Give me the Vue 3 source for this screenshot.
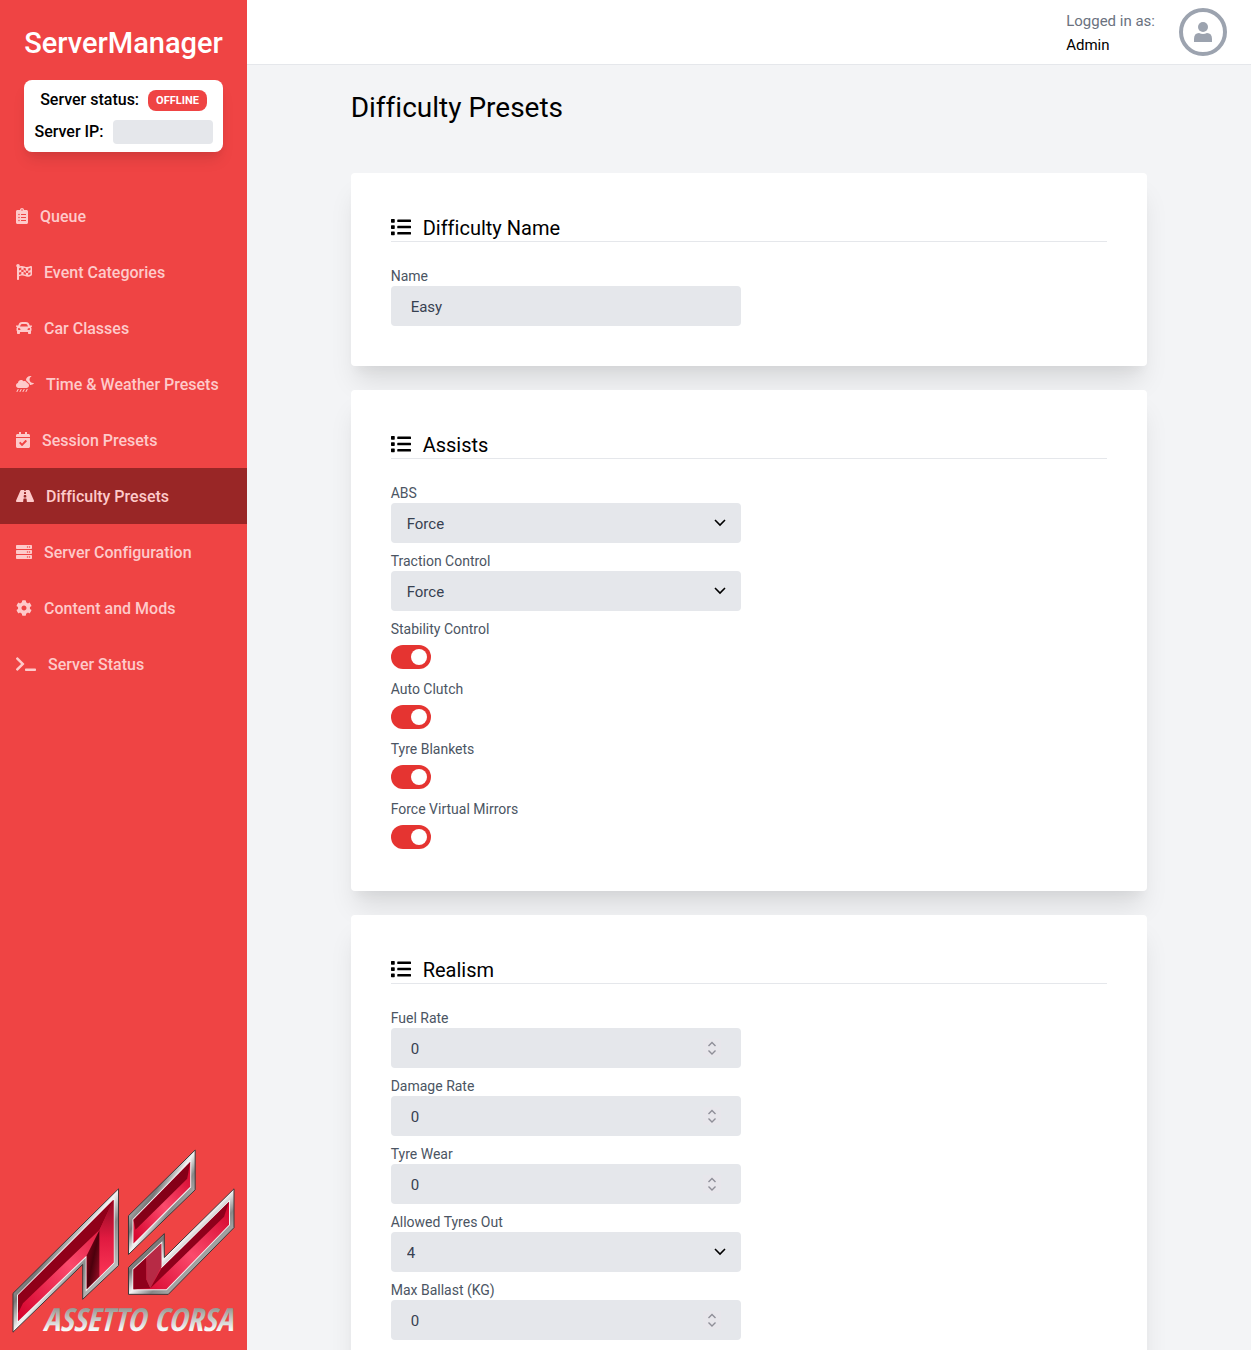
<script setup>
import { ref } from 'vue'

const drops = [364.5, 268.5, 172.5, 76.5]
  .map((x) => `M${x} 418.1c-7.6-4.3-17.4-1.8-21.8 6l-36.6 64c-4.4 7.7-1.7 17.4 6 21.8 2.5 1.4 5.2 2.1 7.9 2.1 5.5 0 10.9-2.9 13.9-8.1l36.6-64c4.3-7.7 1.7-17.4-6-21.8z`)
  .join('')

const rack = [0, 160, 320]
  .map((y) => `M480 ${y + 160}H32c-17.7 0-32-14.3-32-32V${y + 64}c0-17.7 14.3-32 32-32h448c17.7 0 32 14.3 32 32v64c0 17.7-14.3 32-32 32zm-48-88c-13.3 0-24 10.7-24 24s10.7 24 24 24 24-10.7 24-24-10.7-24-24-24zm-64 0c-13.3 0-24 10.7-24 24s10.7 24 24 24 24-10.7 24-24-10.7-24-24-24z`)
  .join('')

const menu = [
  { label: 'Queue', width: 12, path: 'M336 64h-80c0-35.3-28.7-64-64-64s-64 28.7-64 64H48C21.5 64 0 85.5 0 112v352c0 26.5 21.5 48 48 48h288c26.5 0 48-21.5 48-48V112c0-26.5-21.5-48-48-48zM96 424c-13.3 0-24-10.7-24-24s10.7-24 24-24 24 10.7 24 24-10.7 24-24 24zm0-96c-13.3 0-24-10.7-24-24s10.7-24 24-24 24 10.7 24 24-10.7 24-24 24zm0-96c-13.3 0-24-10.7-24-24s10.7-24 24-24 24 10.7 24 24-10.7 24-24 24zm96-192c13.3 0 24 10.7 24 24s-10.7 24-24 24-24-10.7-24-24 10.7-24 24-24zm128 368c0 4.4-3.6 8-8 8H168c-4.4 0-8-3.6-8-8v-16c0-4.4 3.6-8 8-8h144c4.4 0 8 3.6 8 8v16zm0-96c0 4.4-3.6 8-8 8H168c-4.4 0-8-3.6-8-8v-16c0-4.4 3.6-8 8-8h144c4.4 0 8 3.6 8 8v16zm0-96c0 4.4-3.6 8-8 8H168c-4.4 0-8-3.6-8-8v-16c0-4.4 3.6-8 8-8h144c4.4 0 8 3.6 8 8v16z' },
  { label: 'Event Categories', width: 16, path: 'M243.2 189.9V258c26.1 5.9 49.3 15.6 73.6 22.3v-68.2c-26-5.8-49.4-15.5-73.6-22.2zm223.3-123c-34.3 15.9-76.5 31.9-117 31.9C296 98.8 251.7 64 184.3 64c-25 0-47.3 4.4-68 12 2.8-7.3 4.1-15.2 3.6-23.6C118.1 24 94.8 1.2 66.3 0 34.3-1.3 8 24.3 8 56c0 19 9.5 35.8 24 45.9V488c0 13.3 10.7 24 24 24h16c13.3 0 24-10.7 24-24v-94.4c28.3-12.1 63.6-22.1 114.4-22.1 53.6 0 97.8 34.8 165.2 34.8 48.2 0 86.7-16.3 122.5-40.9 8.7-6 13.8-15.8 13.8-26.4V95.9c.1-23.3-24.2-38.8-45.4-29zM169.6 325.5c-25.8 2.7-50 8.2-73.6 16.6v-70.5c26.2-9.3 47.5-15 73.6-17.4v71.3zM464 191c-23.6 9.8-46.3 19.5-73.6 23.9V286c24.8-3.4 51.4-11.8 73.6-26v70.5c-25.1 16.1-48.5 24.7-73.6 27.1V286c-27 3.7-47.9 1.5-73.6-5.6v67.4c-23.9-7.4-47.3-16.7-73.6-21.3V258c-19.7-4.4-40.8-6.8-73.6-3.8v-70c-22.4 3.1-44.6 10.2-73.6 20.9v-70.5c33.2-12.2 50.1-19.8 73.6-22v71.6c27-3.7 48.4-1.3 73.6 5.7v-67.4c23.7 7.4 47.2 16.7 73.6 21.3v68.4c23.7 5.3 47.6 6.9 73.6 2.7V143c27-4.8 52.3-13.6 73.6-22.5z' },
  { label: 'Car Classes', width: 16, path: 'M499.99 176h-59.87l-16.64-41.6C406.38 91.63 365.57 64 319.5 64h-127c-46.06 0-86.88 27.63-103.99 70.4L71.87 176H12.01C4.2 176-1.53 183.34.37 190.91l6 24C7.7 220.25 12.5 224 18.01 224h20.07C24.65 235.73 16 252.78 16 272v48c0 16.12 6.16 30.67 16 41.93V416c0 17.67 14.33 32 32 32h32c17.67 0 32-14.33 32-32v-32h256v32c0 17.67 14.33 32 32 32h32c17.67 0 32-14.33 32-32v-54.07c9.84-11.25 16-25.8 16-41.93v-48c0-19.22-8.65-36.27-22.07-48H494c5.51 0 10.31-3.75 11.64-9.09l6-24c1.89-7.57-3.84-14.91-11.65-14.91zm-352.06-17.83c7.29-18.22 24.94-30.17 44.57-30.17h127c19.63 0 37.28 11.95 44.57 30.17L384 208H128l19.93-49.83zM96 319.8c-19.2 0-32-12.76-32-31.9S76.8 256 96 256s48 28.71 48 47.85-28.8 15.95-48 15.95zm320 0c-19.2 0-48 3.19-48-15.95S396.8 256 416 256s32 12.76 32 31.9-12.8 31.9-32 31.9z' },
  { label: 'Time & Weather Presets', width: 18, path: 'M350.5 225.5c-6.9-37.2-39.3-65.5-78.5-65.5-12.3 0-23.9 3-34.3 8-17.4-24.1-45.6-40-77.7-40-53 0-96 43-96 96 0 .5.2 1.1.2 1.6C27.6 233 0 265.2 0 304c0 44.2 35.8 80 80 80h256c44.2 0 80-35.8 80-80 0-39.2-28.2-71.7-65.5-78.5zm217.4-1.7c-70.4 13.3-135-40.3-135-110.8 0-40.6 21.9-78 57.5-98.1 5.5-3.1 4.1-11.4-2.1-12.5C479.6.8 470.7 0 461.8 0c-77.9 0-141.1 61.2-144.4 137.9 26.7 11.9 48.2 33.8 58.9 61.7 37.1 14.3 64 47.4 70.2 86.8 5.1.5 10 1.5 15.2 1.5 44.7 0 85.6-20.2 112.6-53.3 4.2-4.8-.2-12-6.4-10.8z' + drops },
  { label: 'Session Presets', width: 14, path: 'M436 160H12c-6.6 0-12-5.4-12-12v-36c0-26.5 21.5-48 48-48h48V12c0-6.6 5.4-12 12-12h40c6.6 0 12 5.4 12 12v52h128V12c0-6.6 5.4-12 12-12h40c6.6 0 12 5.4 12 12v52h48c26.5 0 48 21.5 48 48v36c0 6.6-5.4 12-12 12zM12 192h424c6.6 0 12 5.4 12 12v260c0 26.5-21.5 48-48 48H48c-26.5 0-48-21.5-48-48V204c0-6.6 5.4-12 12-12zm333.3 95.9l-28.2-28.4c-4.7-4.7-12.3-4.7-17-.1L194.1 364.7l-46-46.4c-4.7-4.7-12.3-4.7-17-.1l-28.4 28.2c-4.7 4.7-4.7 12.3-.1 17l82.6 83.3c4.7 4.7 12.3 4.7 17 .1l143-141.8c4.7-4.7 4.7-12.3.1-17.1z' },
  { label: 'Difficulty Presets', width: 18, active: true, path: 'M573.19 402.67l-139.79-320C428.43 71.29 417.6 64 405.68 64h-97.59l2.45 23.16c.5 4.72-3.21 8.84-7.96 8.84h-29.16c-4.75 0-8.46-4.12-7.96-8.84L267.91 64h-97.59c-11.93 0-22.76 7.29-27.73 18.67L2.8 402.67C-6.45 423.86 8.31 448 30.54 448h196.84l10.31-97.68c.86-8.14 7.72-14.32 15.91-14.32h68.8c8.19 0 15.05 6.18 15.91 14.32L348.62 448h196.84c22.23 0 36.99-24.14 27.73-45.33zM260.4 135.16a8 8 0 0 1 7.96-7.16h39.29c4.09 0 7.53 3.09 7.96 7.16l4.6 43.58c.75 7.09-4.81 13.26-11.93 13.26h-40.54c-7.13 0-12.68-6.17-11.93-13.26l4.59-43.58zM315.64 304h-55.29c-9.5 0-16.91-8.23-15.91-17.68l5.07-48c.86-8.14 7.72-14.32 15.91-14.32h45.15c8.19 0 15.05 6.18 15.91 14.32l5.07 48c1 9.45-6.41 17.68-15.91 17.68z' },
  { label: 'Server Configuration', width: 16, path: rack },
  { label: 'Content and Mods', width: 16, path: 'M487.4 315.7l-42.6-24.6c4.3-23.2 4.3-47 0-70.2l42.6-24.6c4.9-2.8 7.1-8.6 5.5-14-11.1-35.6-30-67.8-54.7-94.6-3.8-4.1-10-5.1-14.8-2.3L380.8 110c-17.9-15.4-38.5-27.3-60.8-35.1V25.8c0-5.6-3.9-10.5-9.4-11.7-36.7-8.2-74.3-7.8-109.2 0-5.5 1.2-9.4 6.1-9.4 11.7V75c-22.2 7.9-42.8 19.8-60.8 35.1L88.7 85.5c-4.9-2.8-11-1.9-14.8 2.3-24.7 26.7-43.6 58.9-54.7 94.6-1.7 5.4.6 11.2 5.5 14L67.3 221c-4.3 23.2-4.3 47 0 70.2l-42.6 24.6c-4.9 2.8-7.1 8.6-5.5 14 11.1 35.6 30 67.8 54.7 94.6 3.8 4.1 10 5.1 14.8 2.3l42.6-24.6c17.9 15.4 38.5 27.3 60.8 35.1v49.2c0 5.6 3.9 10.5 9.4 11.7 36.7 8.2 74.3 7.8 109.2 0 5.5-1.2 9.4-6.1 9.4-11.7v-49.2c22.2-7.9 42.8-19.8 60.8-35.1l42.6 24.6c4.9 2.8 11 1.9 14.8-2.3 24.7-26.7 43.6-58.9 54.7-94.6 1.5-5.5-.7-11.3-5.6-14.1zM256 336c-44.1 0-80-35.9-80-80s35.9-80 80-80 80 35.9 80 80-35.9 80-80 80z' },
  { label: 'Server Status', width: 20, path: 'M258 273L63.6 467.3c-9.4 9.4-24.6 9.4-33.9 0L7 444.6c-9.4-9.4-9.4-24.5 0-33.9L161 256 7 101.3c-9.3-9.4-9.3-24.5 0-33.9l22.7-22.7c9.4-9.4 24.6-9.4 33.9 0L258 239c9.4 9.4 9.4 24.6 0 34zM640 456v-32c0-13.3-10.7-24-24-24H312c-13.3 0-24 10.7-24 24v32c0 13.3 10.7 24 24 24h304c13.3 0 24-10.7 24-24z' },
]

const listIcon = 'M80 368H16a16 16 0 0 0-16 16v64a16 16 0 0 0 16 16h64a16 16 0 0 0 16-16v-64a16 16 0 0 0-16-16zm0-320H16A16 16 0 0 0 0 64v64a16 16 0 0 0 16 16h64a16 16 0 0 0 16-16V64a16 16 0 0 0-16-16zm0 160H16a16 16 0 0 0-16 16v64a16 16 0 0 0 16 16h64a16 16 0 0 0 16-16v-64a16 16 0 0 0-16-16zm416 176H176a16 16 0 0 0-16 16v32a16 16 0 0 0 16 16h320a16 16 0 0 0 16-16v-32a16 16 0 0 0-16-16zm0-320H176a16 16 0 0 0-16 16v32a16 16 0 0 0 16 16h320a16 16 0 0 0 16-16V80a16 16 0 0 0-16-16zm0 160H176a16 16 0 0 0-16 16v32a16 16 0 0 0 16 16h320a16 16 0 0 0 16-16v-32a16 16 0 0 0-16-16z'

const assistLevels = ['Denied', 'Factory', 'Force']
const cards = ref([
  { title: 'Difficulty Name', fields: [{ id: 'name', label: 'Name', type: 'text', value: 'Easy' }] },
  {
    title: 'Assists',
    fields: [
      { id: 'abs', label: 'ABS', type: 'select', value: 'Force', options: assistLevels },
      { id: 'traction', label: 'Traction Control', type: 'select', value: 'Force', options: assistLevels },
      { id: 'stability', label: 'Stability Control', type: 'toggle', value: true },
      { id: 'clutch', label: 'Auto Clutch', type: 'toggle', value: true },
      { id: 'blankets', label: 'Tyre Blankets', type: 'toggle', value: true },
      { id: 'mirrors', label: 'Force Virtual Mirrors', type: 'toggle', value: true },
    ],
  },
  {
    title: 'Realism',
    fields: [
      { id: 'fuel', label: 'Fuel Rate', type: 'number', value: 0 },
      { id: 'damage', label: 'Damage Rate', type: 'number', value: 0 },
      { id: 'wear', label: 'Tyre Wear', type: 'number', value: 0 },
      { id: 'tyres-out', label: 'Allowed Tyres Out', type: 'select', value: '4', options: ['0', '1', '2', '3', '4'] },
      { id: 'ballast', label: 'Max Ballast (KG)', type: 'number', value: 0 },
    ],
  },
])
</script>

<template>
  <div class="app">
    <aside class="sidebar">
      <div class="brand">ServerManager</div>
      <div class="status">
        <div class="status-row">Server status: <span class="badge">OFFLINE</span></div>
        <div class="status-row">Server IP: <span class="address"></span></div>
      </div>
      <nav class="menu">
        <a v-for="item in menu" :key="item.label" href="#" :class="{ active: item.active }">
          <svg :width="item.width" height="16" :viewBox="`0 0 ${item.width * 32} 512`" aria-hidden="true">
            <path :d="item.path" />
          </svg>
          <span class="caption">{{ item.label }}</span>
        </a>
      </nav>
      <svg class="logo" viewBox="0 0 224 188" role="img" aria-label="Assetto Corsa">
        <defs>
          <linearGradient id="chrome" x1="0" y1="0" x2="1" y2="1">
            <stop offset="0" stop-color="#555" />
            <stop offset=".2" stop-color="#ddd" />
            <stop offset=".4" stop-color="#777" />
            <stop offset=".5" stop-color="#f4f4f4" />
            <stop offset=".6" stop-color="#888" />
            <stop offset=".8" stop-color="#ccc" />
            <stop offset="1" stop-color="#666" />
          </linearGradient>
          <linearGradient id="bar" x1="0" y1="1" x2="1" y2="0">
            <stop offset="0" stop-color="#d4002a" />
            <stop offset=".5" stop-color="#fb4a6c" />
            <stop offset="1" stop-color="#d00028" />
          </linearGradient>
          <linearGradient id="dark" x1="0" y1="0" x2="1" y2="1">
            <stop offset="0" stop-color="#96001c" />
            <stop offset=".5" stop-color="#4c000c" />
            <stop offset="1" stop-color="#a8102c" />
          </linearGradient>
          <linearGradient id="facet" x1="0" y1="0" x2="0" y2="1">
            <stop offset="0" stop-color="#8f0a22" />
            <stop offset=".5" stop-color="#e01a40" />
            <stop offset="1" stop-color="#fb3556" />
          </linearGradient>
          <linearGradient id="steel" x1="0" y1="0" x2="0" y2="1">
            <stop offset=".2" stop-color="#8d8d88" />
            <stop offset=".8" stop-color="#fff" />
          </linearGradient>
        </defs>
        <g fill="url(#chrome)" stroke="#3c3638" stroke-linejoin="round">
          <path d="M1 145L107 40V117L71 151V116L1 184Z" />
          <path d="M117 67L184 1V41L117 106Z" />
          <path d="M117 119L153 85V109L223 40V79L157 146H117Z" />
        </g>
        <g fill="none" stroke="#f2f2f2" stroke-width="2">
          <path d="M6 147L102 51V114L75 141V107L6 173Z" />
          <path d="M122 71L179 13V38L122 95Z" />
          <path d="M122 121L150 95V120L218 53V76L155 141H122Z" />
        </g>
        <path fill="url(#bar)" d="M6 147L102 51V114L75 141V107L6 173Z" />
        <path fill="#900019" d="M6 147L102 51L88 81L11 155L6 165Z" />
        <path fill="url(#dark)" d="M88 81L75 107V141L88 128Z" />
        <path fill="url(#facet)" d="M102 51V114L88 128V81Z" />
        <path fill="url(#bar)" d="M122 71L179 13V38L122 95Z" />
        <path fill="#850018" d="M122 71L179 13L176 30L124 81Z" />
        <path fill="url(#bar)" d="M122 121L150 95V120L218 53V76L155 141H122Z" />
        <path fill="#8f001b" d="M122 121L135 109V131L139 140L122 141Z" />
        <path fill="#b72a45" d="M135 109L150 95V118L139 140L135 131Z" />
        <path fill="#8f001b" d="M150 120L218 53L213 68L139 140Z" />
        <text x="31" y="183">ASSETTO CORSA</text>
      </svg>
    </aside>

    <div class="page">
      <header class="topbar">
        <div class="user">
          <span class="hint">Logged in as:</span>
          <span>Admin</span>
        </div>
        <button class="avatar" type="button" aria-label="Account">
          <svg width="18" height="20" viewBox="0 0 18 20" aria-hidden="true">
            <circle cx="9" cy="5" r="5" />
            <path d="M0 20V17Q0 11 5 11Q9 13 13 11Q18 11 18 17V20Z" />
          </svg>
        </button>
      </header>
      <main class="content">
        <div class="column">
          <h1>Difficulty Presets</h1>
          <section v-for="card in cards" :key="card.title" class="card">
            <h2>
              <svg width="20" height="20" viewBox="0 0 512 512" aria-hidden="true"><path :d="listIcon" /></svg>
              <span class="caption">{{ card.title }}</span>
            </h2>
            <div class="fields">
              <div v-for="field in card.fields" :key="field.id" class="field">
                <label :for="field.id">{{ field.label }}</label>
                <input v-if="field.type === 'text'" :id="field.id" v-model="field.value" class="box" type="text" />
                <div v-else-if="field.type === 'select'" class="holder">
                  <select :id="field.id" v-model="field.value" class="box">
                    <option v-for="option in field.options" :key="option">{{ option }}</option>
                  </select>
                  <svg class="chevron" width="12" height="8" viewBox="0 0 12 8" aria-hidden="true">
                    <path d="M1 1L6 6L11 1" stroke-width="1.6" />
                  </svg>
                </div>
                <div v-else-if="field.type === 'number'" class="holder">
                  <input :id="field.id" v-model="field.value" class="box" type="number" />
                  <svg class="spinner" width="18" height="18" viewBox="0 0 18 18" aria-hidden="true">
                    <path d="M5.500 7L9 3.500L12.500 7M5.500 11.500L9 15L12.500 11.500" stroke-width="1.4" />
                  </svg>
                </div>
                <input v-else :id="field.id" v-model="field.value" class="toggle" type="checkbox" role="switch" />
              </div>
            </div>
          </section>
        </div>
      </main>
    </div>
  </div>
</template>

<style>
body {
  margin: 0;
}
</style>

<style scoped>
* {
  box-sizing: border-box;
}
.app {
  display: flex;
  height: 100vh;
  overflow: hidden;
  background: #f3f4f6;
  color: #000;
  font: 400 16px/24px Roboto, "Liberation Sans", sans-serif;
  font-variant-ligatures: none;
}
.sidebar {
  display: flex;
  flex-direction: column;
  flex: none;
  width: 247px;
  background: #ef4444;
}
.brand {
  margin-top: 24px;
  color: #fff;
  font-size: 29px;
  font-weight: 500;
  line-height: 38px;
  text-align: center;
}
.status {
  display: flex;
  flex-direction: column;
  gap: 8px;
  margin: 18px 24px 36px;
  padding: 8px;
  border-radius: 8px;
  background: #fff;
  box-shadow: 0 10px 15px -3px rgba(0, 0, 0, 0.1), 0 4px 6px -2px rgba(0, 0, 0, 0.05);
  font-weight: 500;
}
.status-row {
  display: flex;
  align-items: center;
  justify-content: center;
  gap: 9px;
}
.badge {
  padding: 1px 8px 0;
  border-radius: 8px;
  background: #ef4444;
  color: #fff;
  font-size: 11px;
  font-weight: 700;
  line-height: 20px;
}
.address {
  width: 100px;
  height: 24px;
  border-radius: 4px;
  background: #e5e7eb;
}
.menu {
  display: flex;
  flex-direction: column;
}
.menu a {
  display: flex;
  align-items: center;
  gap: 12px;
  height: 56px;
  padding: 0 16px;
  color: #fecaca;
  font-weight: 500;
  text-decoration: none;
}
.menu svg {
  fill: currentColor;
}
.menu .active {
  background: #992626;
}
.caption {
  padding-top: 2px;
  line-height: 26px;
}
.logo {
  display: block;
  margin: auto 12px 14px;
  overflow: visible;
}
.logo text {
  fill: url(#steel);
  font: italic 700 32px "Noto Sans ExtraCondensed", "Open Sans Condensed", "Roboto Condensed", "Liberation Sans", sans-serif;
}
.page {
  display: flex;
  flex: 1;
  flex-direction: column;
  min-width: 0;
}
.topbar {
  display: flex;
  flex: none;
  align-items: center;
  justify-content: flex-end;
  gap: 24px;
  height: 65px;
  padding: 0 24px;
  border-bottom: 1px solid #e5e7eb;
  background: #fff;
}
.user {
  display: flex;
  flex-direction: column;
  padding-top: 2px;
  font-size: 15px;
}
.hint {
  color: #6b7280;
}
.avatar {
  display: grid;
  place-items: center;
  width: 48px;
  height: 48px;
  padding: 0;
  border: 4px solid #9ca3af;
  border-radius: 50%;
  background: #fff;
}
.avatar svg {
  fill: #9ca3af;
}
.content {
  flex: 1;
  min-height: 0;
  padding: 24px;
  overflow-y: auto;
  scrollbar-width: none;
}
.column {
  width: calc(100% * 10 / 12);
  margin: 0 auto;
}
h1 {
  margin: 0 0 46px;
  font-size: 28px;
  font-weight: 400;
  line-height: 38px;
}
.card {
  margin-bottom: 24px;
  padding: 40px;
  border-radius: 4px;
  background: #fff;
  box-shadow: 0 20px 25px -5px rgba(0, 0, 0, 0.1), 0 10px 10px -5px rgba(0, 0, 0, 0.04);
}
h2 {
  display: flex;
  align-items: center;
  gap: 12px;
  margin: 0 0 24px;
  border-bottom: 1px solid #e5e7eb;
  font-size: 20px;
  font-weight: 400;
  line-height: 28px;
}
.fields {
  display: flex;
  flex-direction: column;
  gap: 8px;
  width: calc(50% - 8px);
}
.field {
  display: flex;
  flex-direction: column;
}
label {
  color: #4b5563;
  font-size: 14px;
  line-height: 20px;
}
.holder {
  position: relative;
  display: flex;
}
.box {
  width: 100%;
  height: 40px;
  padding: 2px 20px 0;
  border: 0;
  border-radius: 4px;
  background: #e5e7eb;
  color: #374151;
  font: inherit;
  font-size: 15px;
  appearance: none;
}
select.box {
  padding: 2px 16px 0;
}
.box::-webkit-inner-spin-button {
  appearance: none;
}
.holder svg {
  position: absolute;
  fill: none;
  pointer-events: none;
}
.chevron {
  top: 16px;
  right: 15px;
  stroke: #000;
}
.spinner {
  top: 11px;
  right: 20px;
  background: #e7e6eb;
  stroke: #8f8f98;
}
.toggle {
  display: flex;
  align-items: center;
  width: 40px;
  height: 24px;
  margin: 6px 0 2px;
  padding: 0 4px;
  border-radius: 12px;
  background: #9ca3af;
  appearance: none;
}
.toggle::before {
  width: 16px;
  height: 16px;
  border-radius: 50%;
  background: #fff;
  content: "";
}
.toggle:checked {
  justify-content: flex-end;
  background: #e53431;
}
</style>
